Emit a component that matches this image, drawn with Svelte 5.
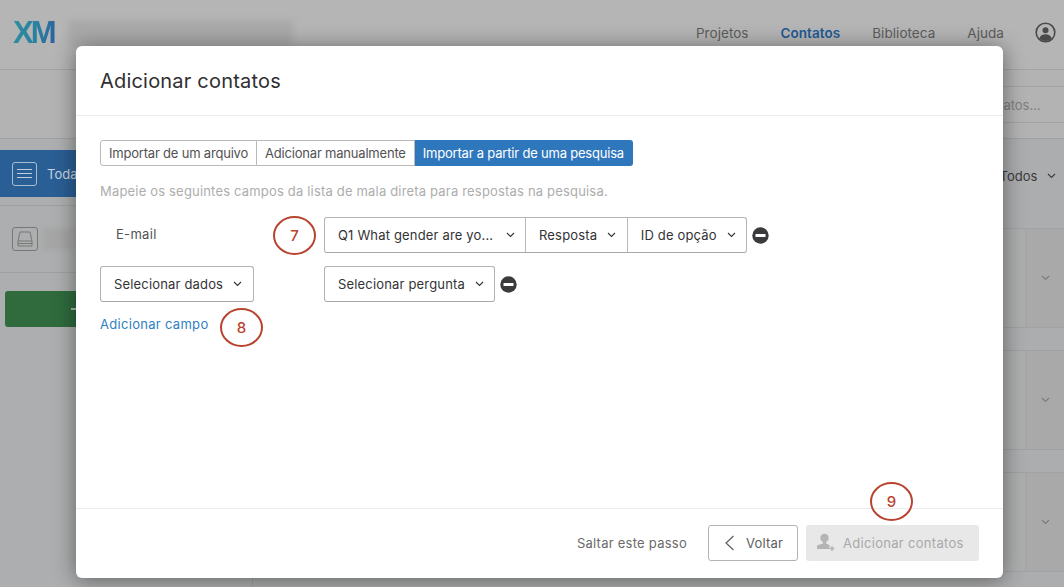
<script>
  const navItems = [
    { label: 'Projetos', active: false },
    { label: 'Contatos', active: true },
    { label: 'Biblioteca', active: false },
    { label: 'Ajuda', active: false }
  ];
  const tabs = [
    { label: 'Importar de um arquivo', active: false },
    { label: 'Adicionar manualmente', active: false },
    { label: 'Importar a partir de uma pesquisa', active: true }
  ];
  const emailSelects = ['Q1 What gender are yo...', 'Resposta', 'ID de opção'];
</script>

{#snippet chevron()}
  <svg class="chev" width="9" height="6" viewBox="0 0 9 6"><path d="M1 1l3.5 3.5L8 1" fill="none" stroke="currentColor" stroke-width="1.1"/></svg>
{/snippet}

{#snippet minus()}
  <svg class="minus" width="17" height="17" viewBox="0 0 17 17"><circle cx="8.5" cy="8.5" r="8.2" fill="#3b3b3d"/><rect x="3.5" y="7" width="10" height="3" fill="#fff"/></svg>
{/snippet}

<div class="page">
  <header class="topbar">
    <div class="logo">XM</div>
    <div class="redacted"></div>
    <nav>
      {#each navItems as item}
        <span class:active={item.active}>{item.label}</span>
      {/each}
      <svg class="avatar" width="21" height="21" viewBox="0 0 21 21">
        <circle cx="10.5" cy="10.5" r="9.3" fill="none" stroke="#4a4a4a" stroke-width="1.6"/>
        <circle cx="10.5" cy="8.2" r="3" fill="#4a4a4a"/>
        <path d="M4.2 16.5c1-3.2 3.4-4.2 6.3-4.2s5.3 1 6.3 4.2a9 9 0 0 1-12.6 0z" fill="#4a4a4a"/>
      </svg>
    </nav>
  </header>

  <div class="toolbar">
    <div class="search">Pesquisar contatos...</div>
  </div>

  <div class="content">
    <aside>
      <div class="all-row">
        <span class="list-icon"><i></i><i></i><i></i></span>
        <span>Todas</span>
      </div>
      <div class="dir-row">
        <svg width="26" height="24" viewBox="0 0 26 24"><rect x=".5" y=".5" width="25" height="23" rx="2.5" fill="none" stroke="#777"/><path d="M6 14l2-9h10l2 9v5H6zM6 14h14M6 16.5h14" fill="none" stroke="#777"/></svg>
        <span class="dir-blur"></span>
      </div>
      <div class="green-btn"><span></span></div>
    </aside>
    <main>
      <div class="filter">Todos {@render chevron()}</div>
      <div class="cards">
        {#each [0, 1, 2] as card (card)}
          <div class="card">
            <div class="card-side">{@render chevron()}</div>
          </div>
        {/each}
      </div>
    </main>
  </div>

  <div class="dialog">
    <h1>Adicionar contatos</h1>

    <div class="body">
      <div class="tabs">
        {#each tabs as tab}
          <span class="tab" class:active={tab.active}>{tab.label}</span>
        {/each}
      </div>
      <p class="hint">Mapeie os seguintes campos da lista de mala direta para respostas na pesquisa.</p>

      <div class="map-row first">
        <div class="field-cell"><span class="email-label">E-mail</span></div>
        <div class="select-group">
          {#each emailSelects as label}
            <span class="select">{label} {@render chevron()}</span>
          {/each}
        </div>
        {@render minus()}
      </div>

      <div class="map-row">
        <div class="field-cell">
          <div class="select-group"><span class="select">Selecionar dados {@render chevron()}</span></div>
        </div>
        <div class="select-group"><span class="select">Selecionar pergunta {@render chevron()}</span></div>
        {@render minus()}
      </div>

      <div class="add-field">Adicionar campo</div>
    </div>

    <footer>
      <span class="skip">Saltar este passo</span>
      <span class="back">
        <svg width="11" height="16" viewBox="0 0 11 16"><path d="M9.5 1L2 8l7.5 7" fill="none" stroke="#5e5e60" stroke-width="1.2"/></svg>
        Voltar
      </span>
      <span class="finish">
        <svg width="20" height="19" viewBox="0 0 20 19"><circle cx="8.5" cy="5" r="4.2" fill="#b4b4b4"/><path d="M7 8h3v2.4l3.5 1.5V16H1v-3.5l6-2.1z" fill="#b4b4b4"/><path d="M16 13v5M13.5 15.5h5" stroke="#b4b4b4" stroke-width="1.5"/></svg>
        Adicionar contatos
      </span>
    </footer>
  </div>

  <span class="callout c7">7</span>
  <span class="callout c8">8</span>
  <span class="callout c9">9</span>
</div>

<style>
  :global(body) {
    margin: 0;
  }
  .page {
    position: relative;
    width: 1064px;
    height: 587px;
    overflow: hidden;
    background: #acadae;
    font-family: Inter, "Liberation Sans", sans-serif;
    font-size: 13px;
    color: #3b3b3d;
  }
  .topbar {
    box-sizing: border-box;
    height: 70px;
    display: flex;
    align-items: center;
    background: #b5b5b5;
    border-bottom: 1px solid #a3a3a3;
    padding: 0 8px 4px 13px;
  }
  .logo {
    font-family: "Liberation Sans", sans-serif;
    font-size: 31px;
    font-weight: 700;
    letter-spacing: -3px;
    background: linear-gradient(100deg, #2f8f9c 0%, #2a7fa0 45%, #2b4aa0 100%);
    -webkit-background-clip: text;
    background-clip: text;
    color: transparent;
    width: 55px;
  }
  .redacted {
    width: 225px;
    height: 26px;
    background: #a9a9a9;
    filter: blur(3px);
  }
  nav {
    margin-left: auto;
    display: flex;
    align-items: center;
    gap: 32px;
    font-size: 13.5px;
    letter-spacing: 0.05px;
    color: #5c5c5c;
  }
  nav .active {
    color: #1f5a94;
    font-weight: 600;
  }
  .avatar {
    margin-left: -1px;
  }
  .toolbar {
    box-sizing: border-box;
    height: 69px;
    padding-top: 16px;
    background: #b3b3b3;
    border-bottom: 1px solid #a0a0a0;
  }
  .search {
    box-sizing: border-box;
    height: 37px;
    margin-left: 912px;
    border-top: 1px solid #a3a3a3;
    border-bottom: 1px solid #a3a3a3;
    display: flex;
    align-items: center;
    color: #808080;
    white-space: nowrap;
  }
  .content {
    display: flex;
    height: 449px;
  }
  aside {
    box-sizing: border-box;
    width: 253px;
    padding-top: 11px;
    background: #adaeaf;
    border-right: 1px solid #a0a0a0;
  }
  .all-row {
    height: 47px;
    display: flex;
    align-items: center;
    gap: 10px;
    padding-left: 12px;
    background: #2a5f95;
    color: #c9d4df;
  }
  .list-icon {
    box-sizing: border-box;
    width: 25px;
    height: 24px;
    border: 1px solid #a9bdd1;
    border-radius: 3px;
    display: flex;
    flex-direction: column;
    justify-content: center;
    gap: 3px;
    padding: 0 4px;
  }
  .list-icon i {
    height: 1px;
    background: #c0cfde;
  }
  .dir-row {
    box-sizing: border-box;
    height: 68px;
    margin-top: 8px;
    border-top: 1px solid #a0a0a0;
    border-bottom: 1px solid #a0a0a0;
    display: flex;
    align-items: center;
    gap: 5px;
    padding-left: 12px;
  }
  .dir-blur {
    width: 30px;
    height: 22px;
    background: #a6a6a6;
    filter: blur(2px);
  }
  .green-btn {
    box-sizing: border-box;
    height: 36px;
    margin: 18px 10px 0 5px;
    padding-left: 66px;
    display: flex;
    align-items: center;
    border-radius: 3px;
    background: #2f6b3d;
  }
  .green-btn span {
    width: 10px;
    height: 2px;
    background: #a9b9ad;
  }
  main {
    flex: 1;
  }
  .filter {
    height: 89px;
    padding-top: 29px;
    box-sizing: border-box;
    text-align: right;
    padding-right: 8px;
    color: #3a3a3a;
  }
  .filter .chev {
    margin-left: 6px;
    vertical-align: 2px;
  }
  .cards {
    display: flex;
    flex-direction: column;
    gap: 22px;
  }
  .card {
    box-sizing: border-box;
    height: 100px;
    border-top: 1px solid #a2a2a2;
    border-bottom: 1px solid #a2a2a2;
    background: #adaeae;
    display: flex;
    justify-content: flex-end;
  }
  .card-side {
    width: 38px;
    border-left: 1px solid #a5a5a5;
    background: #a9a9a9;
    display: flex;
    align-items: center;
    justify-content: center;
    color: #7b7b7b;
  }
  .dialog {
    position: absolute;
    left: 76px;
    top: 46px;
    box-sizing: border-box;
    width: 927px;
    height: 532px;
    display: flex;
    flex-direction: column;
    background: #fff;
    border-radius: 6px;
    box-shadow: 0 2px 22px rgba(0, 0, 0, 0.45);
  }
  h1 {
    box-sizing: border-box;
    height: 70px;
    margin: 0;
    padding: 22px 24px 0;
    border-bottom: 1px solid #ececec;
    font-size: 20px;
    line-height: 27px;
    font-weight: 400;
    letter-spacing: 0.2px;
    color: #2f2f31;
  }
  .body {
    flex: 1;
    padding: 24px 24px 0;
  }
  .tabs {
    display: inline-flex;
    height: 26px;
    vertical-align: top;
  }
  .tab {
    box-sizing: border-box;
    display: flex;
    align-items: center;
    padding: 0 8px;
    border: 1px solid #b9b9b9;
    border-left: 0;
    color: #525254;
    letter-spacing: -0.2px;
  }
  .tab:first-child {
    border-left: 1px solid #b9b9b9;
    border-radius: 3px 0 0 3px;
  }
  .tab.active {
    background: #2f77bd;
    border-color: #2f77bd;
    color: #fff;
    border-radius: 0 3px 3px 0;
  }
  .hint {
    margin: 16px 0 0;
    line-height: 18px;
    color: #adadad;
    letter-spacing: 0.18px;
  }
  .map-row {
    display: flex;
    align-items: center;
    height: 36px;
    margin-top: 13px;
  }
  .map-row.first {
    margin-top: 17px;
  }
  .field-cell {
    width: 224px;
  }
  .email-label {
    padding-left: 16px;
    color: #525254;
    position: relative;
    top: -1px;
    letter-spacing: 0.3px;
  }
  .select-group {
    box-sizing: border-box;
    display: inline-flex;
    height: 36px;
    border: 1px solid #b3b3b3;
    border-bottom-color: #a8a8a8;
    border-radius: 3px;
  }
  .select {
    display: flex;
    align-items: center;
    justify-content: space-between;
    gap: 10px;
    padding: 0 10.5px 0 13px;
    color: #333335;
    white-space: nowrap;
    letter-spacing: 0.17px;
  }
  .select + .select {
    border-left: 1px solid #b9b9b9;
  }
  .first .select:first-child {
    width: 200px;
    box-sizing: border-box;
  }
  .minus {
    margin-left: 5px;
  }
  .add-field {
    margin-top: 13px;
    color: #2f7fc4;
    line-height: 18px;
    letter-spacing: 0.3px;
  }
  footer {
    box-sizing: border-box;
    height: 70px;
    border-top: 1px solid #ececec;
    display: flex;
    align-items: center;
    justify-content: flex-end;
    padding: 0 24px 2px 0;
  }
  .skip {
    margin-right: 21px;
    color: #6a6a6c;
    letter-spacing: 0.25px;
  }
  .back {
    box-sizing: border-box;
    width: 90px;
    height: 36px;
    display: flex;
    align-items: center;
    gap: 11px;
    padding-left: 15px;
    border: 1px solid #b3b3b3;
    border-radius: 3px;
    color: #5e5e60;
    letter-spacing: 0.2px;
  }
  .finish {
    box-sizing: border-box;
    width: 173px;
    height: 36px;
    margin-left: 8px;
    display: flex;
    align-items: center;
    gap: 7px;
    padding-left: 10px;
    border-radius: 3px;
    background: #e8e8e8;
    color: #a8a8a8;
    letter-spacing: 0.3px;
  }
  .callout {
    position: absolute;
    box-sizing: border-box;
    width: 43px;
    height: 39px;
    display: flex;
    align-items: center;
    justify-content: center;
    border: 2px solid #b8442f;
    border-radius: 50%;
    color: #b8442f;
    font-size: 15px;
    font-weight: 500;
  }
  .c7 { left: 273px; top: 216px; }
  .c8 { left: 220px; top: 308px; }
  .c9 { left: 870px; top: 482px; }
</style>
